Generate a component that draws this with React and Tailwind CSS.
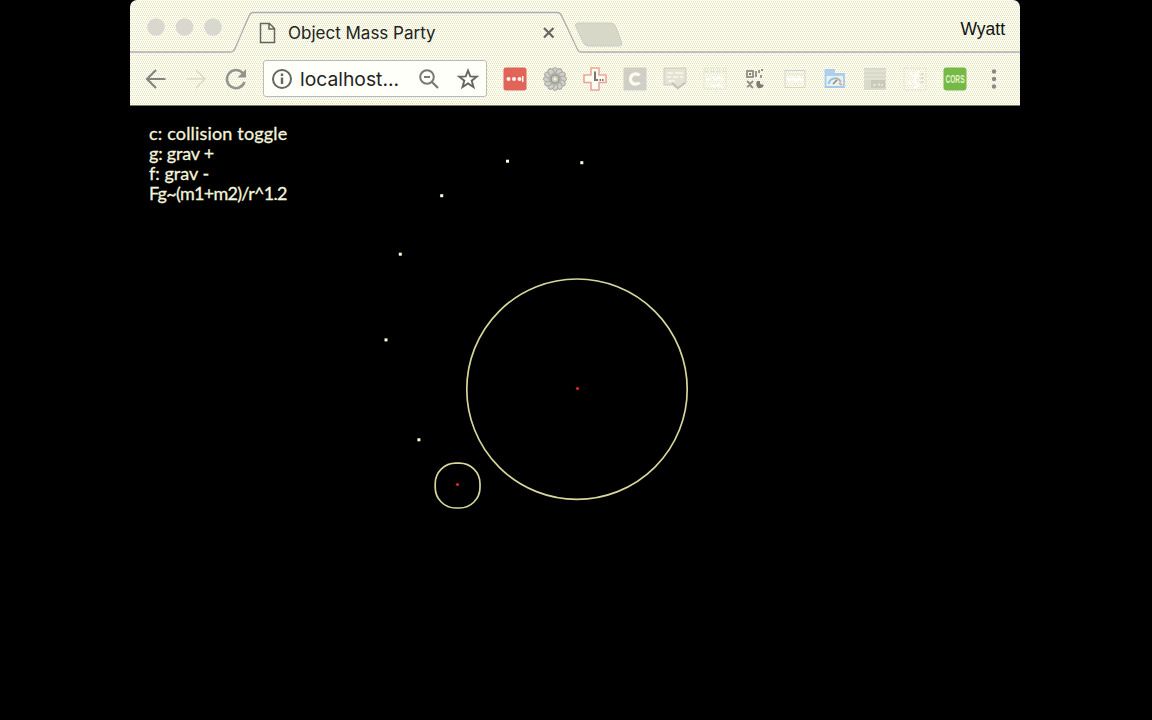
import React from "react";

const stroke = { fill: "none", stroke: "#777774", strokeWidth: 2.2 };

function ChromeShape() {
  return (
    <svg className="absolute inset-0" width="890" height="106" viewBox="0 0 890 106">
      <defs>
        <pattern id="strip" width="4" height="4" patternUnits="userSpaceOnUse">
          <rect width="4" height="4" fill="#ffffff" />
          <path d="M0 0h1v1h-1zM2 0h1v1h-1zM1 2h1v1h-1zM3 2h1v1h-1z" fill="#ffffac" />
          <path d="M1 1h1v1h-1zM3 1h1v1h-1zM0 3h1v1h-1zM2 3h1v1h-1z" fill="#dcdce6" />
        </pattern>
      </defs>
      <rect width="890" height="105" fill="url(#strip)" />
      <rect y="105" width="890" height="1" fill="#77776a" />
      <path d="M0 52H100Q103.500 52 105 48.500L119 16Q120.500 12.500 123 12.500H427Q430 12.500 431.500 15.500L447 48.500Q448.500 52 451 52H890" fill="none" stroke="#b0b0b0" strokeWidth="1.400" />
      <path d="M448 23H481Q484 23 485.500 26L491.500 42Q492.500 46 489 46H458Q455 46 453.500 43L446 27Q444.500 23 448 23Z" fill="#d8d8c8" stroke="#cbcbbd" />
      <g fill="#d8d8cf">
        <circle cx="26" cy="27" r="8.800" />
        <circle cx="54.500" cy="27" r="8.800" />
        <circle cx="83" cy="27" r="8.800" />
      </g>
    </svg>
  );
}

function TabStrip() {
  return (
    <div className="relative flex h-[53px] w-full shrink-0 items-center">
      <svg className="ml-[129px] mt-[13px] shrink-0" width="17" height="22" viewBox="0 0 17 22">
        <path d="M1.500 1.500H10.500L15.500 6.500V20.500H1.500ZM10 1.500V7H15.500" fill="none" stroke="#666660" strokeWidth="1.500" />
      </svg>
      <span className="ml-[12px] mt-[12px] w-[252px] whitespace-nowrap text-[17px] leading-[22px] text-[#222]">Object Mass Party</span>
      <svg className="mt-[12px] shrink-0" width="17" height="17" viewBox="0 0 17 17">
        <path d="M4 4L13.500 13.500M13.500 4L4 13.500" fill="none" stroke="#666660" strokeWidth="2.200" />
      </svg>
      <span className="ml-auto mr-[15px] mt-[4px] font-['Liberation_Sans'] text-[17.500px] leading-[22px] text-[#111]">Wyatt</span>
    </div>
  );
}

function Ext({ children }) {
  return (
    <div className="flex w-10 justify-center">
      <svg width="24" height="24" viewBox="0 0 24 24">{children}</svg>
    </div>
  );
}

const petals = [0, 30, 60, 90, 120, 150, 180, 210, 240, 270, 300, 330];

function Extensions() {
  return (
    <div className="flex">
      <Ext>
        <rect x="0.500" y="0.500" width="23" height="23" rx="2.500" fill="#e06458" />
        <g fill="#fff5ee"><circle cx="5.500" cy="12" r="2" /><circle cx="11" cy="12" r="2" /><circle cx="16.500" cy="12" r="2" /><rect x="19" y="9" width="1.500" height="6" /></g>
      </Ext>
      <Ext>
        <g transform="translate(12 12)">
          {petals.map((a) => (
            <ellipse key={a} transform={`rotate(${a})`} cx="0" cy="-7.500" rx="2.800" ry="4" fill="#d0d0ca" stroke="#a6a6a0" />
          ))}
          <circle r="6.500" fill="#b2b2ab" />
          <circle r="4" fill="#c9c9c0" stroke="#929289" />
          <circle r="1.500" fill="#f2f2d6" />
        </g>
      </Ext>
      <Ext>
        <path d="M8 1H16V8H23V15.500H16V23H8V15.500H1V8H8Z" fill="#fbfbef" stroke="#eba59c" strokeWidth="1.600" />
        <path d="M12 4.500V13H15" fill="none" stroke="#77776f" strokeWidth="2" />
        <path d="M16.500 13H21" stroke="#77776f" strokeWidth="2" strokeDasharray="1.500 1" />
      </Ext>
      <Ext>
        <rect x="0.500" y="0.500" width="23" height="23" fill="#cfcfc5" />
        <path d="M16.500 8.500A5.200 5.200 0 1 0 16.500 15.500" fill="none" stroke="#fcfcf0" strokeWidth="3.200" />
      </Ext>
      <Ext>
        <path d="M1 1H23V16H20L15 22L10 18H1Z" fill="#e3e3d4" stroke="#cdcdc0" />
        <path d="M4 6H10M12 6H20M4 10H8M10 10H15M17 10H20M5 14H12" stroke="#fafaec" strokeWidth="1.600" />
        <path d="M9 16L15 21L22 16" fill="none" stroke="#c3c3b6" strokeWidth="2" />
      </Ext>
      <Ext>
        <path d="M1 1H23V22H1Z" fill="none" stroke="#dedece" strokeDasharray="2 1" />
        <path d="M1 4.500H23" stroke="#dfdfd2" strokeWidth="2" strokeDasharray="2 1" />
        <path d="M3 12H7M9 10L13 13L16 10L20 13M8 17L12 20L15 17L20 21" fill="none" stroke="#ffffff" strokeWidth="1.800" />
      </Ext>
      <Ext>
        <g fill="none" stroke="#8e8e85" strokeWidth="1.800">
          <rect x="4" y="4" width="6" height="6" />
          <path d="M13 4V10M16 3V6M18 8V11M20 3H18M4 14L7 17L10 14M4 20L7 18L10 21" />
        </g>
        <path d="M6 6H8V8H6ZM14 14Q12 18 15 21Q19 22 21 18L17 17V14Z" fill="#7c7c74" />
      </Ext>
      <Ext>
        <rect x="2" y="3.500" width="20" height="17" fill="none" stroke="#d5d5ca" />
        <path d="M4 7H20" stroke="#e3e3d6" />
        <path d="M4 11L7 14L10 11L13 14L16 11L20 14" fill="none" stroke="#ffffff" strokeWidth="2.500" />
      </Ext>
      <Ext>
        <path d="M2.500 3H11V7H21V20H2.500Z" fill="#eaf2ee" stroke="#a5caee" strokeWidth="1.800" />
        <path d="M2.500 3H11L12 7H21V9H2.500Z" fill="#accff2" />
        <path d="M5.500 17A7 7 0 0 1 11 11.500" fill="none" stroke="#94c4ec" strokeWidth="2" />
        <path d="M11 11.500Q15 10.500 18 15" fill="none" stroke="#b3b9b0" strokeWidth="2" />
        <path d="M10 17L14 13" stroke="#858b88" strokeWidth="1.600" />
        <path d="M16 16L19 18" stroke="#e5a29a" strokeWidth="2" />
      </Ext>
      <Ext>
        <rect x="1" y="1" width="22" height="22" fill="#dadacb" />
        <path d="M1 4H23M1 8H23M1 12H23" stroke="#e8e8da" />
        <rect x="8" y="13" width="14" height="8" fill="#c9c9bc" />
        <path d="M10 18H13M16 16V19M18 18H20" stroke="#e9e9dd" strokeWidth="1.500" />
      </Ext>
      <Ext>
        <rect x="1" y="1" width="22" height="22" fill="none" stroke="#dcdccd" strokeDasharray="2 1" />
        <path d="M6 5L10 9L16 4M15 8L10 14L16 18L11 21M5 14L8 18" fill="none" stroke="#ffffff" strokeWidth="2.200" />
        <path d="M19 6V18" stroke="#dcdccd" strokeWidth="3" strokeDasharray="2 2" />
      </Ext>
      <Ext>
        <rect x="0.500" y="0.500" width="23" height="23" rx="3" fill="#76b946" />
        <text transform="translate(12 16) scale(0.6 1)" textAnchor="middle" fontFamily="Liberation Sans" fontWeight="700" fontSize="11" fill="#e4f5cb">CORS</text>
      </Ext>
    </div>
  );
}

function Toolbar() {
  return (
    <div className="relative flex h-[52px] shrink-0 items-center pb-px">
      <svg className="ml-[14px] shrink-0" width="24" height="24" viewBox="0 0 24 24">
        <path d="M21.500 12H3.500M12 3L3 12L12 21" {...stroke} stroke="#85857f" />
      </svg>
      <svg className="ml-[16px] shrink-0" width="24" height="24" viewBox="0 0 24 24">
        <path d="M2.500 12H20.500M12 3L21 12L12 21" fill="none" stroke="#d9d9cd" strokeWidth="1.500" />
      </svg>
      <svg className="ml-[16px] shrink-0" width="24" height="24" viewBox="0 0 24 24">
        <path d="M19 6.500A9 9 0 1 0 20.500 15" {...stroke} strokeWidth="2.500" stroke="#94948e" />
        <path d="M22 2V10.500H13.500Z" fill="#94948e" />
      </svg>
      <div className="ml-[15px] flex h-[37px] w-[224px] shrink-0 items-center rounded-[3px] border border-[#bbbbb8] bg-[#fffffa]">
        <svg className="ml-[7px] shrink-0" width="22" height="22" viewBox="0 0 22 22">
          <circle cx="11" cy="11" r="9" {...stroke} stroke="#666660" strokeWidth="2" />
          <path d="M11 9.500V16M11 5.500V8" stroke="#666660" strokeWidth="2.400" />
        </svg>
        <span className="ml-[7px] w-[117px] whitespace-nowrap text-[19.300px] leading-6 text-[#222]">localhost...</span>
        <svg className="shrink-0" width="24" height="24" viewBox="0 0 24 24">
          <circle cx="10" cy="10" r="6.800" {...stroke} strokeWidth="2" />
          <path d="M7 10H13M15 15L21 21" {...stroke} />
        </svg>
        <svg className="ml-[15px] shrink-0" width="24" height="24" viewBox="0 0 24 24">
          <path d="M12 3.500L14.300 9.400L20.800 9.700L15.700 13.700L17.500 20L12 16.400L6.500 20L8.300 13.700L3.200 9.700L9.700 9.400Z" {...stroke} strokeWidth="1.900" stroke="#66665f" />
        </svg>
      </div>
      <div className="ml-[7.500px]"><Extensions /></div>
      <svg className="ml-[15.500px] shrink-0" width="8" height="24" viewBox="0 0 8 24" fill="#8b8b84">
        <circle cx="4" cy="4.500" r="2.200" /><circle cx="4" cy="12" r="2.200" /><circle cx="4" cy="19.500" r="2.200" />
      </svg>
    </div>
  );
}

const stars = [[377.500, 56.200], [451.800, 57.700], [311.700, 90.700], [270.300, 149.200], [256, 234.900], [288.900, 334.800]];

function Simulation() {
  return (
    <div className="flex h-[615px] flex-col bg-black">
      <div className="relative h-full">
        <svg className="absolute inset-0" width="890" height="615" viewBox="0 0 890 615">
          <g fill="none" stroke="#d6d69c" strokeWidth="1.700">
            <circle cx="447" cy="284.200" r="110.200" />
            <rect x="305.200" y="358.200" width="44.800" height="44.800" rx="20.500" />
          </g>
          {stars.map(([x, y]) => <rect key={x} x={x - 1.500} y={y - 1.500} width="3" height="3" fill="#ffffe0" />)}
          <circle cx="447.500" cy="283.500" r="1.600" fill="#d6301b" />
          <circle cx="327.500" cy="379.500" r="1.600" fill="#d6301b" />
        </svg>
        <div className="relative pl-[19px] pt-[18px] font-['Lato',sans-serif] text-[18px] leading-5 text-[#f4f4dc] [-webkit-text-stroke:0.3px_#f4f4dc]">
          <div className="whitespace-nowrap tracking-[0.170px]">c: collision toggle</div>
          <div className="whitespace-nowrap tracking-[-0.200px]">g: grav +</div>
          <div className="whitespace-nowrap">f: grav -</div>
          <div className="whitespace-nowrap tracking-[-0.720px]">Fg~(m1+m2)/r^1.2</div>
        </div>
      </div>
    </div>
  );
}

export default function App() {
  return (
    <div className="flex h-[720px] w-[1152px] justify-center overflow-hidden bg-black pr-[2px] font-['Inter',sans-serif]">
      <div className="w-[890px] overflow-hidden rounded-t-[7px]">
        <div className="relative z-10">
          <ChromeShape />
          <TabStrip />
          <Toolbar />
        </div>
        <Simulation />
      </div>
    </div>
  );
}
